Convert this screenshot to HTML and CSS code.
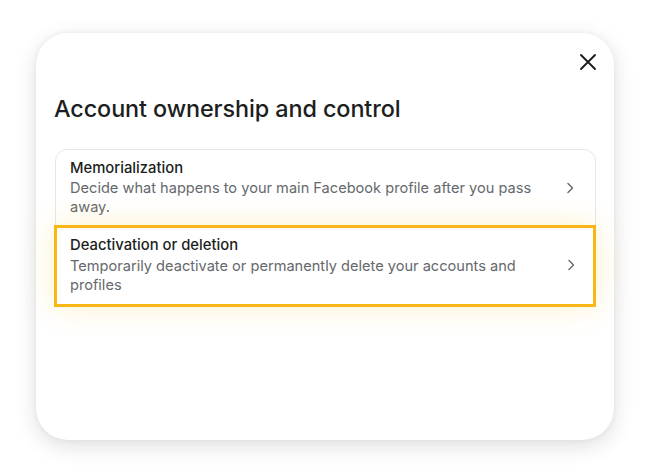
FILE: index.html
```html
<!DOCTYPE html>
<html>
<head>
<meta charset="utf-8">
<link rel="stylesheet" href="styles.css">
</head>
<body>
<div class="stage">
  <div class="card">
    <div class="top">
      <button class="close" aria-label="Close">
        <svg width="18" height="18" viewBox="0 0 18 18"><path d="M2 2 L16 16 M16 2 L2 16" stroke="#1c1e21" stroke-width="1.9" stroke-linecap="round" fill="none"/></svg>
      </button>
    </div>
    <h1 class="title">Account ownership and control</h1>
    <div class="list">
      <div class="row">
        <div class="text">
          <div class="row-title">Memorialization</div>
          <div class="row-desc">Decide what happens to your main Facebook profile after you pass away.</div>
        </div>
        <svg class="chev" width="10" height="12" viewBox="0 0 10 12"><path d="M3 1.5 L7.5 6 L3 10.5" stroke="#65686c" stroke-width="1.4" fill="none" stroke-linecap="round" stroke-linejoin="round"/></svg>
      </div>
      <div class="row highlight">
        <div class="text">
          <div class="row-title">Deactivation or deletion</div>
          <div class="row-desc">Temporarily deactivate or permanently delete your accounts and profiles</div>
        </div>
        <svg class="chev" width="10" height="12" viewBox="0 0 10 12"><path d="M3 1.5 L7.5 6 L3 10.5" stroke="#65686c" stroke-width="1.4" fill="none" stroke-linecap="round" stroke-linejoin="round"/></svg>
      </div>
    </div>
  </div>
</div>
</body>
</html>
```

FILE: styles.css
```css
* { box-sizing: border-box; }
html, body { margin: 0; padding: 0; background: #ffffff; }
body { font-family: Inter, "Noto Sans", "Liberation Sans", sans-serif; color: #1c1e21; }
.stage { padding: 33px 36px 0 36px; width: 650px; height: 473px; }
.card {
  width: 578px;
  height: 407px;
  background: #ffffff;
  border-radius: 32px;
  box-shadow: 0 6px 22px rgba(0,0,0,0.13), 0 0 6px rgba(0,0,0,0.05);
  padding: 18px 18px 0 18px;
}
.top { display: flex; justify-content: flex-end; height: 24px; }
.close {
  border: 0; background: transparent; padding: 0; width: 24px; height: 24px;
  display: flex; align-items: center; justify-content: center; margin-right: -4px; margin-top: -1px;
}
.title {
  margin: 20px 0 0 0;
  font-size: 23.4px;
  font-weight: 500;
  line-height: 28px;
  letter-spacing: -0.1px;
  color: #1c1e21;
}
.list {
  margin: 26px 0 0 1px;
  width: 541px;
  border: 1px solid #e4e6ea;
  border-radius: 12px;
}
.row {
  display: flex;
  align-items: center;
  padding: 8px 20px 8px 14px;
}
.text { flex: 1; }
.row-title { font-size: 14.8px; font-weight: 500; line-height: 20px; color: #1c1e21; margin-bottom: 1px; }
.row-desc { font-size: 14.6px; font-weight: 400; line-height: 19px; color: #65686c; padding-right: 10px; }
.chev { flex: none; margin-left: 8px; }
.highlight {
  margin: 0 -1px -1px -2px;
  padding: 7px 17px 9px 13px;
  border: 3px solid #f8b714;
  border-radius: 0;
  box-shadow: 0 0 28px rgba(250, 200, 60, 0.28);
  background: #ffffff;
  position: relative;
}
.highlight .row-title { margin-top: 0; margin-bottom: 2px; }
```
